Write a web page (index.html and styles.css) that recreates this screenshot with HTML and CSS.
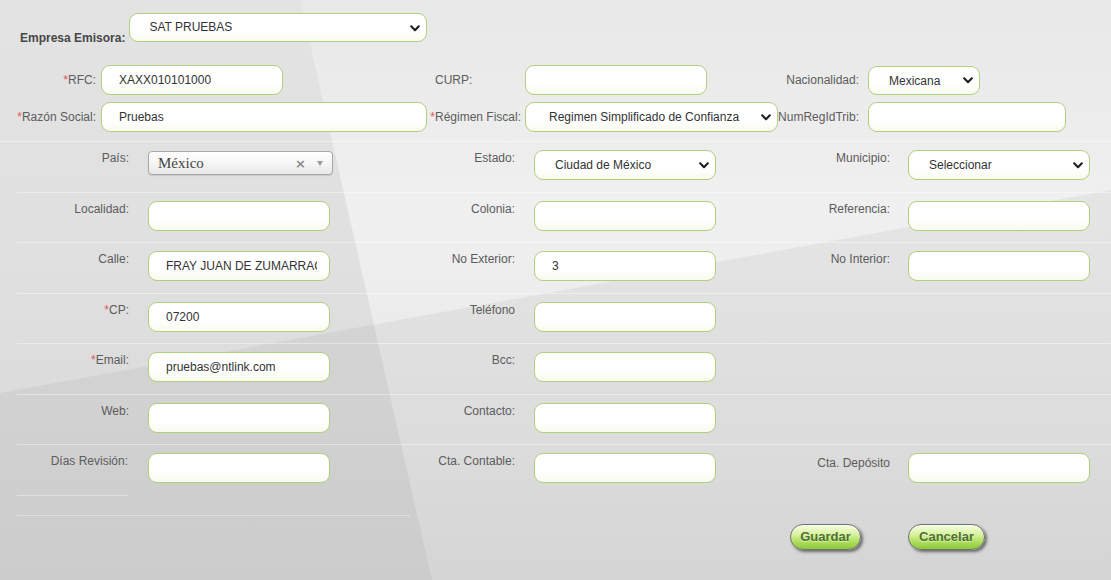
FILE: index.html
```html
<!DOCTYPE html>
<html lang="es">
<head>
<meta charset="utf-8">
<title>Empresa Emisora</title>
<link rel="stylesheet" href="styles.css">
</head>
<body>
<div class="page">
  <div class="bg-light"></div>
  <div class="bg-dark"></div>

  <div class="header">
    <span class="header-label">Empresa Emisora:</span>
    <div class="sel sel-empresa"><span>SAT PRUEBAS</span><svg class="chev" width="10" height="7" viewBox="0 0 10 7"><path d="M1.2 1.3 L5 5.2 L8.8 1.3" stroke="#1f1f1f" stroke-width="2.1" fill="none" stroke-linecap="round" stroke-linejoin="round"/></svg></div>
  </div>

  <div class="top-grid">
    <label class="lbl lbl-r"><span class="req">*</span>RFC:</label>
    <div class="cell"><input class="inp w182" value="XAXX010101000"></div>
    <label class="lbl lbl-l">CURP:</label>
    <div class="cell"><input class="inp w182" value=""></div>
    <label class="lbl lbl-r5">Nacionalidad:</label>
    <div class="cell"><div class="sel sel-nac"><span>Mexicana</span><svg class="chev" width="10" height="7" viewBox="0 0 10 7"><path d="M1.2 1.3 L5 5.2 L8.8 1.3" stroke="#1f1f1f" stroke-width="2.1" fill="none" stroke-linecap="round" stroke-linejoin="round"/></svg></div></div>

    <label class="lbl lbl-r"><span class="req">*</span>Razón Social:</label>
    <div class="cell"><input class="inp w326" value="Pruebas"></div>
    <label class="lbl lbl-r3"><span class="req">*</span>Régimen Fiscal:</label>
    <div class="cell"><div class="sel sel-reg"><span>Regimen Simplificado de Confianza</span><svg class="chev" width="10" height="7" viewBox="0 0 10 7"><path d="M1.2 1.3 L5 5.2 L8.8 1.3" stroke="#1f1f1f" stroke-width="2.1" fill="none" stroke-linecap="round" stroke-linejoin="round"/></svg></div></div>
    <label class="lbl lbl-r5">NumRegIdTrib:</label>
    <div class="cell"><input class="inp w198" value=""></div>
  </div>

  <div class="grid">
    <div class="row">
      <div class="glbl">País:</div>
      <div class="gin"><div class="s2"><span class="s2-text">México</span><span class="s2-x">×</span><span class="s2-arrow"></span></div></div>
      <div class="glbl">Estado:</div>
      <div class="gin"><div class="sel sel-g"><span>Ciudad de México</span><svg class="chev" width="10" height="7" viewBox="0 0 10 7"><path d="M1.2 1.3 L5 5.2 L8.8 1.3" stroke="#1f1f1f" stroke-width="2.1" fill="none" stroke-linecap="round" stroke-linejoin="round"/></svg></div></div>
      <div class="glbl">Municipio:</div>
      <div class="gin"><div class="sel sel-g sel-mun"><span>Seleccionar</span><svg class="chev" width="10" height="7" viewBox="0 0 10 7"><path d="M1.2 1.3 L5 5.2 L8.8 1.3" stroke="#1f1f1f" stroke-width="2.1" fill="none" stroke-linecap="round" stroke-linejoin="round"/></svg></div></div>
    </div>
    <div class="row">
      <div class="glbl">Localidad:</div>
      <div class="gin"><input class="inp w182" value=""></div>
      <div class="glbl">Colonia:</div>
      <div class="gin"><input class="inp w182" value=""></div>
      <div class="glbl">Referencia:</div>
      <div class="gin"><input class="inp w182" value=""></div>
    </div>
    <div class="row">
      <div class="glbl">Calle:</div>
      <div class="gin"><input class="inp w182 clip" value="FRAY JUAN DE ZUMARRAGA"></div>
      <div class="glbl">No Exterior:</div>
      <div class="gin"><input class="inp w182" value="3"></div>
      <div class="glbl">No Interior:</div>
      <div class="gin"><input class="inp w182" value=""></div>
    </div>
    <div class="row">
      <div class="glbl"><span class="req">*</span>CP:</div>
      <div class="gin"><input class="inp w182" value="07200"></div>
      <div class="glbl">Teléfono</div>
      <div class="gin"><input class="inp w182" value=""></div>
      <div class="glbl"></div>
      <div class="gin"></div>
    </div>
    <div class="row">
      <div class="glbl"><span class="req">*</span>Email:</div>
      <div class="gin"><input class="inp w182" value="pruebas@ntlink.com"></div>
      <div class="glbl">Bcc:</div>
      <div class="gin"><input class="inp w182" value=""></div>
      <div class="glbl"></div>
      <div class="gin"></div>
    </div>
    <div class="row">
      <div class="glbl">Web:</div>
      <div class="gin"><input class="inp w182" value=""></div>
      <div class="glbl">Contacto:</div>
      <div class="gin"><input class="inp w182" value=""></div>
      <div class="glbl"></div>
      <div class="gin"></div>
    </div>
    <div class="row row-last">
      <div class="glbl">Días Revisión:</div>
      <div class="gin"><input class="inp w182" value=""></div>
      <div class="glbl">Cta. Contable:</div>
      <div class="gin"><input class="inp w182" value=""></div>
      <div class="glbl glbl-dep">Cta. Depósito</div>
      <div class="gin"><input class="inp w182" value=""></div>
    </div>
    <div class="row row-empty">
      <div class="glbl"></div>
      <div class="gin"></div>
    </div>
  </div>

  <div class="actions">
    <button class="btn btn-g">Guardar</button>
    <button class="btn btn-c">Cancelar</button>
  </div>
</div>
</body>
</html>
```

FILE: styles.css
```css
* { box-sizing: border-box; }

html, body {
  margin: 0;
  padding: 0;
  background: #dcdcdc;
}

body {
  font-family: "Liberation Sans", Arial, sans-serif;
  font-size: 12px;
  color: #333;
}

.page {
  position: relative;
  width: 1111px;
  height: 580px;
  overflow: hidden;
  padding-top: 13px;
  background: linear-gradient(180deg, #e3e3e3 0%, #e0e0e0 45%, #d6d6d6 100%);
  z-index: 0;
}

.bg-light {
  position: absolute;
  inset: 0;
  z-index: -1;
  background: linear-gradient(180deg, rgba(255,255,255,0.18), rgba(255,255,255,0.5) 35%, rgba(255,255,255,0.22) 100%);
  clip-path: polygon(300px 0, 1111px 0, 1111px 580px, 432px 580px);
}

.bg-dark {
  position: absolute;
  inset: 0;
  z-index: -1;
  background: rgba(0,0,0,0.045);
  clip-path: polygon(0 393px, 1111px 190px, 1111px 580px, 0 580px);
}

/* header */
.header {
  display: flex;
  align-items: flex-start;
  padding-left: 20px;
  height: 29px;
}

.header-label {
  font-weight: bold;
  color: #474747;
  margin-top: 18px;
  margin-right: 4px;
}

/* fake select */
.sel {
  display: flex;
  align-items: center;
  justify-content: space-between;
  height: 30px;
  padding: 0 6px 0 20px;
  border: 1.5px solid #b3cf7c;
  border-radius: 9px;
  background: linear-gradient(180deg, #ffffff 0%, #ffffff 60%, #f8fbef 100%);
  color: #333;
  font-size: 12px;
}

.sel span { white-space: nowrap; }
.chev { flex: none; }

.sel-empresa {
  width: 298px;
  height: 29px;
  padding-left: 19px;
  align-items: flex-start;
  padding-top: 6px;
}
.sel-empresa .chev { margin-top: 5px; }

.sel-nac { width: 112px; height: 29px; margin-top: 1px; }
.sel-reg { width: 253px; padding-left: 23px; }

/* text input */
.inp {
  display: block;
  height: 30px;
  padding: 0 2px 0 17px;
  border: 1.5px solid #b3cf7c;
  border-radius: 9px;
  background: linear-gradient(180deg, #ffffff 0%, #ffffff 60%, #f8fbef 100%);
  font-family: "Liberation Sans", Arial, sans-serif;
  font-size: 12px;
  color: #333;
  outline: none;
}

.clip { padding-right: 12px; }

.w182 { width: 182px; }
.w198 { width: 198px; }
.w326 { width: 326px; }

/* top grid */
.top-grid {
  display: grid;
  grid-template-columns: 101px 331px 93px 255px 88px 243px;
  grid-auto-rows: 30px;
  row-gap: 7px;
  margin-top: 23px;
  padding-bottom: 9px;
  border-bottom: 1px solid rgba(255,255,255,0.45);
}

.lbl {
  display: flex;
  align-items: center;
  color: #5c5c5c;
  white-space: nowrap;
}

.lbl-r { justify-content: flex-end; padding-right: 5px; }
.lbl-l { justify-content: flex-start; padding-left: 3px; margin-top: -1px; }
.lbl-r3 { justify-content: flex-end; padding-right: 4px; }
.lbl-r5 { justify-content: flex-end; padding-right: 9px; }

.req { color: #e25555; }

.cell { display: flex; align-items: center; }

/* lower grid */
.grid {
  display: flex;
  flex-direction: column;
}

.row {
  display: grid;
  grid-template-columns: 140px 240px 146px 234px 140px 211px;
  height: 50.5px;
}

.glbl {
  text-align: right;
  padding-right: 11px;
  padding-top: 9px;
  line-height: 14px;
  color: #5c5c5c;
  white-space: nowrap;
  border-bottom: 1px solid rgba(255,255,255,0.4);
}

.row .glbl:first-child { margin-left: 17px; }

.glbl-dep { padding-right: 23px; padding-top: 11px; }

.gin {
  padding-top: 8px;
  padding-left: 8px;
  border-bottom: 1px solid rgba(255,255,255,0.4);
}

.row .glbl:nth-child(5) { padding-right: 10px; }

.row-last .glbl:first-child { padding-right: 22px; margin-right: -11px; }
.row-last > :not(:first-child) { border-bottom: none; }
.row-last .glbl:first-child { margin-right: 12px; padding-right: 0; }

.sel-g { width: 182px; }

.row-empty { height: 20px; }
.row-empty .gin { margin-right: -30px; }

/* select2 style */
.s2 {
  position: relative;
  display: flex;
  align-items: center;
  width: 185px;
  height: 24px;
  margin-top: 1px;
  padding-left: 9px;
  border: 1px solid #a8a8a8;
  border-radius: 4px;
  background: linear-gradient(180deg, #ffffff 0%, #f6f6f6 50%, #e8e8e8 100%);
  box-shadow: 0 1px 1px rgba(0,0,0,0.12);
}

.s2-text {
  font-family: "Liberation Serif", "Times New Roman", serif;
  font-size: 15px;
  color: #444;
  flex: 1;
}

.s2-x {
  font-family: "DejaVu Sans", sans-serif;
  font-size: 13px;
  font-weight: bold;
  color: #8a8a8a;
  margin-right: 11px;
}

.s2-arrow {
  width: 0;
  height: 0;
  border-left: 3px solid transparent;
  border-right: 3px solid transparent;
  border-top: 5px solid #9a9a9a;
  margin-right: 9px;
  margin-top: 1px;
}

/* buttons */
.actions {
  display: flex;
  gap: 47px;
  padding-left: 790px;
  margin-top: 8px;
}

.btn {
  height: 26px;
  border: 1px solid #707070;
  border-radius: 13px;
  background: linear-gradient(180deg, #f6fde2 0%, #d8f29f 40%, #a8db55 75%, #8cc93a 100%);
  box-shadow: 2px 2px 3px rgba(0,0,0,0.5), inset 0 1px 0 rgba(255,255,255,0.8);
  font-family: "Liberation Sans", Arial, sans-serif;
  font-weight: bold;
  font-size: 13px;
  color: #4e7030;
  text-shadow: 0 1px 0 rgba(255,255,255,0.5);
  padding: 0;
  cursor: pointer;
}

.btn-g { width: 71px; }
.btn-c { width: 77px; }
```
